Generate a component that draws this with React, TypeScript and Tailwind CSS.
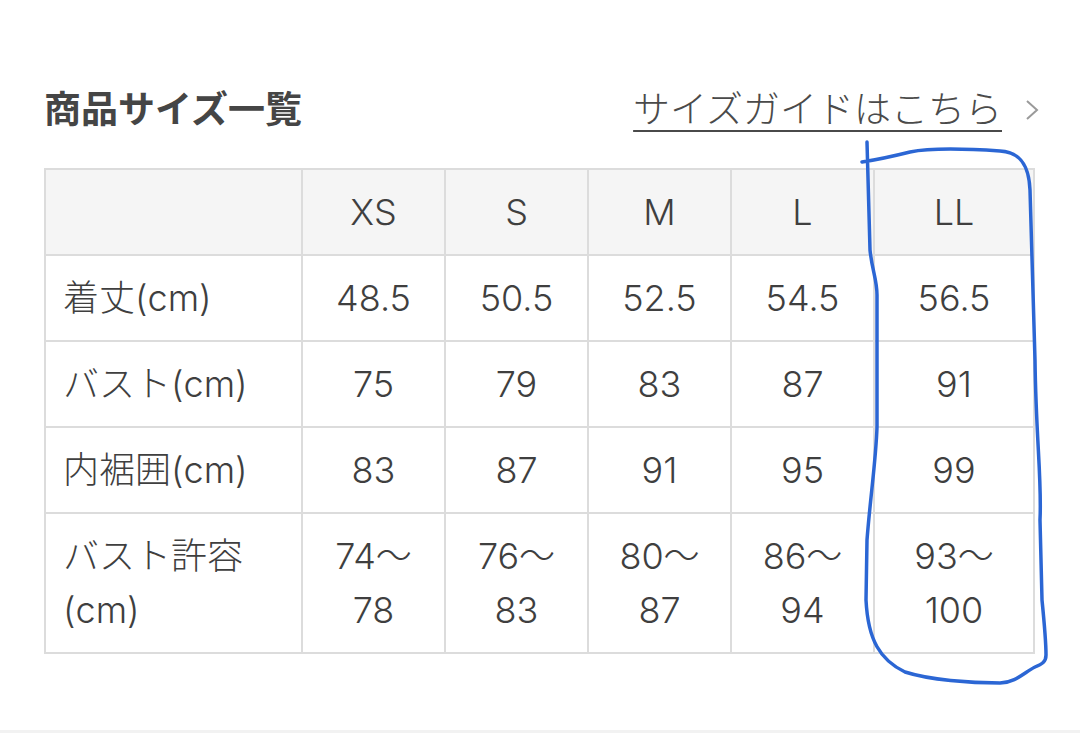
const sizes = ["XS", "S", "M", "L", "LL"];

const rows: { label: React.ReactNode; values: React.ReactNode[] }[] = [
  { label: "着丈(cm)", values: ["48.5", "50.5", "52.5", "54.5", "56.5"] },
  { label: "バスト(cm)", values: ["75", "79", "83", "87", "91"] },
  { label: "内裾囲(cm)", values: ["83", "87", "91", "95", "99"] },
  {
    label: (
      <>
        バスト許容
        <br />
        (cm)
      </>
    ),
    values: [
      ["74〜", "78"],
      ["76〜", "83"],
      ["80〜", "87"],
      ["86〜", "94"],
      ["93〜", "100"],
    ].map(([a, b]) => (
      <>
        {a}
        <br />
        {b}
      </>
    )),
  },
];

const font = "font-['Inter','Noto_Sans_CJK_JP',sans-serif]";

export default function App() {
  return (
    <div className={`relative h-[733px] w-full overflow-hidden bg-white text-[#444] ${font}`}>
      <div className="pl-[44px] pr-[40px] pt-[88px]">
        <div className="flex items-center justify-between w-[996px]">
          <h2 className="text-[37px] leading-[44px] font-bold text-[#454545]">商品サイズ一覧</h2>
          <a href="#" className="flex items-center gap-[22px] text-[#4a4a4a]">
            <span className="text-[37px] leading-[44px] font-light underline decoration-2 underline-offset-[7px]">
              サイズガイドはこちら
            </span>
            <svg width="16" height="24" viewBox="0 0 16 24" fill="none">
              <polyline points="3,3 13,12 3,21" stroke="#9a9a9a" strokeWidth="2" />
            </svg>
          </a>
        </div>

        <table className="mt-[36px] w-[991px] table-fixed border-collapse border-2 border-[#dcdcdc] text-[36px] leading-[54px] font-light text-[#3f3f3f]">
          <colgroup>
            <col className="w-[257px]" />
            <col className="w-[143px]" />
            <col className="w-[143px]" />
            <col className="w-[143px]" />
            <col className="w-[143px]" />
            <col />
          </colgroup>
          <thead>
            <tr className="bg-[#f5f5f5]">
              <th className="border-2 border-[#dcdcdc] py-[15px]" />
              {sizes.map((s) => (
                <th key={s} className="border-2 border-[#dcdcdc] py-[15px] font-light text-center">
                  {s}
                </th>
              ))}
            </tr>
          </thead>
          <tbody>
            {rows.map((r, i) => (
              <tr key={i}>
                <td className="border-2 border-[#dcdcdc] py-[15px] pl-[17px] text-left">{r.label}</td>
                {r.values.map((v, j) => (
                  <td key={j} className="border-2 border-[#dcdcdc] py-[15px] text-center">
                    {v}
                  </td>
                ))}
              </tr>
            ))}
          </tbody>
        </table>
      </div>

      <div className="absolute bottom-0 left-0 h-[3px] w-full bg-[#f2f2f2]" />

      {/* hand-drawn marker around the LL column */}
      <svg className="pointer-events-none absolute inset-0" width="1080" height="733" viewBox="0 0 1080 733" fill="none">
        <path
          d="M867,142 L870,250 C872,270 877,280 877,295 L877,427 C876,460 870,500 867,540 L866,600 C868,640 880,660 905,672 C930,680 970,683 1000,683 C1015,683 1025,672 1035,667 C1042,664 1046,662 1046,655 C1046,640 1044,620 1042,600 L1040,520 C1042,480 1036,440 1035,360 C1033,300 1031,240 1030,190 C1029,165 1020,152 1000,151 C970,149 930,148 910,152 C890,157 875,160 862,162"
          stroke="#2b66d4"
          strokeWidth="3.5"
          strokeLinecap="round"
          strokeLinejoin="round"
        />
      </svg>
    </div>
  );
}
